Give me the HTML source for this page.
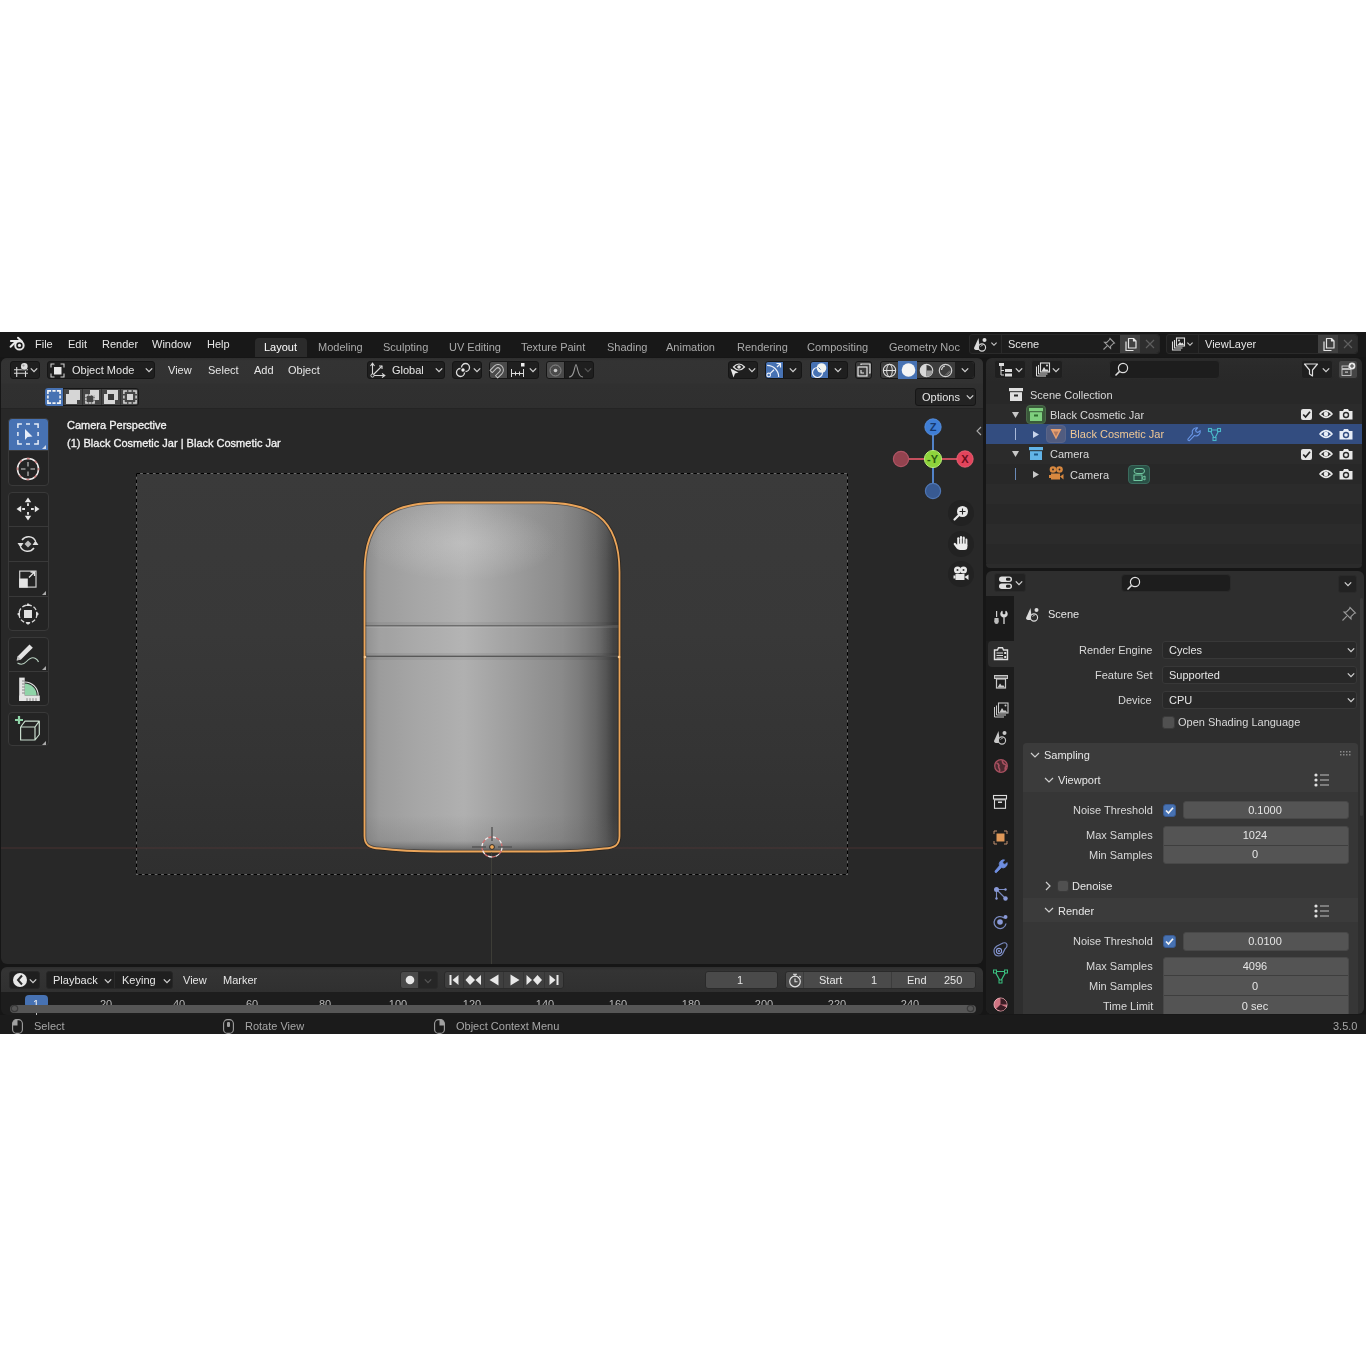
<!DOCTYPE html><html><head><meta charset="utf-8"><style>
html,body{margin:0;padding:0;background:#fff;width:1366px;height:1366px;overflow:hidden}
body{position:relative;font-family:"Liberation Sans",sans-serif}
.t{position:absolute;line-height:14px;white-space:nowrap;will-change:transform}
svg{overflow:visible}
</style></head><body>

<div style="position:absolute;left:0px;top:332px;width:1366px;height:702px;background:#161616;border-radius:0px;"></div>
<div style="position:absolute;left:0px;top:332px;width:1366px;height:25px;background:#181818;border-radius:0px;"></div>
<svg style="position:absolute;left:8px;top:335px" width="20" height="20" viewBox="0 0 20 20"><g stroke="#e8e8e8" stroke-width="2" stroke-linecap="round" fill="none"><circle cx="11.44" cy="10.4" r="4.2"/><path d="M2.9 6 L12.5 6 M10 2.7 L14 6.5 M2.6 11.7 L8.2 6.3"/></g><circle cx="11.44" cy="10.4" r="1.6" fill="#e8e8e8"/></svg>
<div class="t" style="left:35px;top:337px;color:#e6e6e6;font-size:11px;">File</div>
<div class="t" style="left:68px;top:337px;color:#e6e6e6;font-size:11px;">Edit</div>
<div class="t" style="left:102px;top:337px;color:#e6e6e6;font-size:11px;">Render</div>
<div class="t" style="left:152px;top:337px;color:#e6e6e6;font-size:11px;">Window</div>
<div class="t" style="left:207px;top:337px;color:#e6e6e6;font-size:11px;">Help</div>
<div style="position:absolute;left:255px;top:338px;width:52px;height:19px;background:#2b2b2b;border-radius:4px;border-bottom-left-radius:0;border-bottom-right-radius:0"></div>
<div class="t" style="left:264px;top:340px;color:#ffffff;font-size:11px;">Layout</div>
<div class="t" style="left:318px;top:340px;color:#aaaaaa;font-size:11px;">Modeling</div>
<div class="t" style="left:383px;top:340px;color:#aaaaaa;font-size:11px;">Sculpting</div>
<div class="t" style="left:449px;top:340px;color:#aaaaaa;font-size:11px;">UV Editing</div>
<div class="t" style="left:521px;top:340px;color:#aaaaaa;font-size:11px;">Texture Paint</div>
<div class="t" style="left:607px;top:340px;color:#aaaaaa;font-size:11px;">Shading</div>
<div class="t" style="left:666px;top:340px;color:#aaaaaa;font-size:11px;">Animation</div>
<div class="t" style="left:737px;top:340px;color:#aaaaaa;font-size:11px;">Rendering</div>
<div class="t" style="left:807px;top:340px;color:#aaaaaa;font-size:11px;">Compositing</div>
<div class="t" style="left:889px;top:340px;color:#aaaaaa;font-size:11px;">Geometry Noc</div>
<div style="position:absolute;left:962px;top:332px;width:7px;height:25px;background:#181818;border-radius:0px;"></div>
<div style="position:absolute;box-sizing:border-box;left:969px;top:334px;width:191px;height:20px;background:#1d1d1d;border-radius:3px;border:1px solid #2a2a2a;"></div>
<div style="position:absolute;left:1001px;top:335px;width:1px;height:18px;background:#2a2a2a;border-radius:0px;"></div>
<div style="position:absolute;left:1120px;top:335px;width:20px;height:18px;background:#404040;border-radius:0px;"></div>
<div style="position:absolute;left:1140px;top:335px;width:19px;height:18px;background:#2e2e2e;border-radius:0px;border-top-right-radius:3px;border-bottom-right-radius:3px"></div>
<div style="position:absolute;box-sizing:border-box;left:1166px;top:334px;width:192px;height:20px;background:#1d1d1d;border-radius:3px;border:1px solid #2a2a2a;"></div>
<div style="position:absolute;left:1198px;top:335px;width:1px;height:18px;background:#2a2a2a;border-radius:0px;"></div>
<div style="position:absolute;left:1318px;top:335px;width:20px;height:18px;background:#404040;border-radius:0px;"></div>
<div style="position:absolute;left:1338px;top:335px;width:19px;height:18px;background:#2e2e2e;border-radius:0px;border-top-right-radius:3px;border-bottom-right-radius:3px"></div>
<div class="t" style="left:1008px;top:337px;color:#e6e6e6;font-size:11px;">Scene</div>
<div class="t" style="left:1205px;top:337px;color:#e6e6e6;font-size:11px;">ViewLayer</div>
<svg style="position:absolute;left:973px;top:337px" width="14" height="14" viewBox="0 0 14 14"><path d="M5.5 1 L1 11 Q1 13 4 13 L7 13 Z" fill="#dcdcdc"/><circle cx="11.5" cy="3" r="2" fill="#dcdcdc"/><circle cx="9" cy="10.5" r="3.6" fill="#1d1d1d" stroke="#dcdcdc" stroke-width="1.1"/><path d="M7.6 9.6 Q8.2 8.4 9.6 8.4" stroke="#dcdcdc" stroke-width="0.9" fill="none"/></svg>
<svg style="position:absolute;left:988px;top:339px" width="12" height="10" viewBox="0 0 12 10"><path d="M3.4 3.7 L6 6.3 L8.6 3.7" fill="none" stroke="#cfcfcf" stroke-width="1.1"/></svg>
<svg style="position:absolute;left:1102px;top:337px" width="14" height="14" viewBox="0 0 14 14"><path d="M8 1.5 L12.5 6 L11.2 6.6 L8.6 9.2 L8.6 11.5 L2.5 5.4 L4.8 5.4 L7.4 2.8 Z M5.2 8.8 L1.5 12.5" fill="none" stroke="#9a9a9a" stroke-width="1.1"/></svg>
<svg style="position:absolute;left:1123px;top:337px" width="14" height="14" viewBox="0 0 14 14"><path d="M5.5 1.5 L10.5 1.5 L13 4 L13 11 L5.5 11 Z M10.5 1.5 L10.5 4 L13 4" fill="none" stroke="#e4e4e4" stroke-width="1.2" stroke-linejoin="round"/><path d="M3 4.5 L3 13.5 L10.5 13.5" fill="none" stroke="#e4e4e4" stroke-width="1.2"/></svg>
<svg style="position:absolute;left:1321px;top:337px" width="14" height="14" viewBox="0 0 14 14"><path d="M5.5 1.5 L10.5 1.5 L13 4 L13 11 L5.5 11 Z M10.5 1.5 L10.5 4 L13 4" fill="none" stroke="#e4e4e4" stroke-width="1.2" stroke-linejoin="round"/><path d="M3 4.5 L3 13.5 L10.5 13.5" fill="none" stroke="#e4e4e4" stroke-width="1.2"/></svg>
<svg style="position:absolute;left:1143px;top:337px" width="14" height="14" viewBox="0 0 14 14"><path d="M3 3 L11 11 M11 3 L3 11" stroke="#5e5e5e" stroke-width="1.2"/></svg>
<svg style="position:absolute;left:1341px;top:337px" width="14" height="14" viewBox="0 0 14 14"><path d="M3 3 L11 11 M11 3 L3 11" stroke="#5e5e5e" stroke-width="1.2"/></svg>
<svg style="position:absolute;left:1171px;top:337px" width="14" height="14" viewBox="0 0 14 14"><path d="M1.5 4.5 L1.5 13 L10 13 M3.5 3 L3.5 11 L11.5 11" fill="none" stroke="#dcdcdc" stroke-width="1.1"/><rect x="5.5" y="1" width="8" height="8" fill="none" stroke="#dcdcdc" stroke-width="1.1"/><path d="M6.5 8 L9 5 L10.5 6.5 L11.5 5.5 L13 8 Z" fill="#dcdcdc"/><circle cx="8" cy="3.5" r="1" fill="#dcdcdc"/></svg>
<svg style="position:absolute;left:1184px;top:339px" width="12" height="10" viewBox="0 0 12 10"><path d="M3.4 3.7 L6 6.3 L8.6 3.7" fill="none" stroke="#cfcfcf" stroke-width="1.1"/></svg>
<div style="position:absolute;left:1px;top:358px;width:982px;height:606px;background:#282828;border-radius:6px;"></div>
<div style="position:absolute;left:1px;top:358px;width:982px;height:50px;background:linear-gradient(#2e2e2e 0px,#333333 3px,#323232 25px,#303030 26px,#2f2f2f 50px);border-radius:6px;border-bottom-left-radius:0;border-bottom-right-radius:0"></div>
<div style="position:absolute;left:1px;top:408px;width:982px;height:1px;background:#242424;border-radius:0px;"></div>
<div style="position:absolute;left:136px;top:473px;width:712px;height:402px;background:linear-gradient(#3a3a3a,#383838 40%,#343434 70%,#2f2f2f);border-radius:0px;"></div>
<svg style="position:absolute;left:136px;top:473px" width="712" height="402" viewBox="0 0 712 402"><rect x="0.5" y="0.5" width="711" height="401" fill="none" stroke="#6a6a6a" stroke-width="1"/><rect x="0.5" y="0.5" width="711" height="401" fill="none" stroke="#000" stroke-width="1" stroke-dasharray="3.6 2.8"/></svg>
<div style="position:absolute;box-sizing:border-box;left:10px;top:361px;width:30px;height:18px;background:#1f1f1f;border-radius:3px;border:1px solid #161616;"></div>
<svg style="position:absolute;left:13px;top:362px" width="18" height="16" viewBox="0 0 18 16"><g stroke="#d8d8d8" stroke-width="1.1" fill="none"><path d="M1 7.7 L15 7.7 M1 11.2 L15 11.2 M3.7 5 L3.7 15 M12.5 9 L12.5 15"/></g><circle cx="11.3" cy="4.4" r="3.7" fill="#2b2b2b"/><circle cx="11.3" cy="4.4" r="3.3" fill="#dedede"/><circle cx="10.5" cy="3.6" r="1.1" fill="#9a9a9a"/></svg>
<svg style="position:absolute;left:28px;top:365px" width="12" height="10" viewBox="0 0 12 10"><path d="M2.8 3.4 L6 6.6 L9.2 3.4" fill="none" stroke="#d0d0d0" stroke-width="1.3"/></svg>
<div style="position:absolute;box-sizing:border-box;left:47px;top:361px;width:108px;height:18px;background:#1f1f1f;border-radius:3px;border:1px solid #161616;"></div>
<svg style="position:absolute;left:50px;top:363px" width="15" height="15" viewBox="0 0 15 15"><path d="M1 4.5 L1 1 L4.5 1 M10.5 1 L14 1 L14 4.5 M14 10.5 L14 14 L10.5 14 M4.5 14 L1 14 L1 10.5" fill="none" stroke="#d0d0d0" stroke-width="1.1"/><rect x="4" y="4" width="7.5" height="7.5" fill="#e8e8e8"/></svg>
<div class="t" style="left:72px;top:363px;color:#e6e6e6;font-size:11px;">Object Mode</div>
<svg style="position:absolute;left:143px;top:365px" width="12" height="10" viewBox="0 0 12 10"><path d="M2.8 3.4 L6 6.6 L9.2 3.4" fill="none" stroke="#d0d0d0" stroke-width="1.3"/></svg>
<div class="t" style="left:168px;top:363px;color:#e6e6e6;font-size:11px;">View</div>
<div class="t" style="left:208px;top:363px;color:#e6e6e6;font-size:11px;">Select</div>
<div class="t" style="left:254px;top:363px;color:#e6e6e6;font-size:11px;">Add</div>
<div class="t" style="left:288px;top:363px;color:#e6e6e6;font-size:11px;">Object</div>
<div style="position:absolute;box-sizing:border-box;left:367px;top:361px;width:78px;height:18px;background:#1f1f1f;border-radius:3px;border:1px solid #161616;"></div>
<svg style="position:absolute;left:370px;top:362px" width="16" height="16" viewBox="0 0 16 16"><path d="M2.5 1.5 L2.5 13.5 L14.5 13.5 M2.5 13.5 L12 4" fill="none" stroke="#d8d8d8" stroke-width="1.1"/><path d="M0.5 4 L2.5 1.2 L4.5 4 M12 11.5 L14.8 13.5 L12 15.5 M9 4 L12 4 L12 7" fill="none" stroke="#d8d8d8" stroke-width="1.1"/><circle cx="2.5" cy="13.5" r="1.6" fill="#1f1f1f" stroke="#d8d8d8"/></svg>
<div class="t" style="left:392px;top:363px;color:#e6e6e6;font-size:11px;">Global</div>
<svg style="position:absolute;left:433px;top:365px" width="12" height="10" viewBox="0 0 12 10"><path d="M2.8 3.4 L6 6.6 L9.2 3.4" fill="none" stroke="#d0d0d0" stroke-width="1.3"/></svg>
<div style="position:absolute;box-sizing:border-box;left:452px;top:361px;width:30px;height:18px;background:#1f1f1f;border-radius:3px;border:1px solid #161616;"></div>
<svg style="position:absolute;left:455px;top:362px" width="16" height="16" viewBox="0 0 16 16"><path d="M6.5 5.5 A4 4 0 1 1 10.5 9.5" fill="none" stroke="#dcdcdc" stroke-width="1.3"/><path d="M9.5 10.5 A4 4 0 1 1 5.5 6.5" fill="none" stroke="#dcdcdc" stroke-width="1.3"/><circle cx="8" cy="8" r="1.7" fill="#eeeeee"/></svg>
<svg style="position:absolute;left:471px;top:365px" width="12" height="10" viewBox="0 0 12 10"><path d="M2.8 3.4 L6 6.6 L9.2 3.4" fill="none" stroke="#d0d0d0" stroke-width="1.3"/></svg>
<div style="position:absolute;box-sizing:border-box;left:489px;top:361px;width:19px;height:18px;background:#4a4a4a;border-radius:3px;border:1px solid #161616;border-top-right-radius:0;border-bottom-right-radius:0"></div>
<svg style="position:absolute;left:490px;top:362px" width="16" height="16" viewBox="0 0 16 16"><g transform="translate(8 8) rotate(-135) scale(0.9) translate(-6 -6.5)"><path d="M0 0 L3.5 0 L3.5 6.5 A2.5 2.5 0 0 0 8.5 6.5 L8.5 0 L12 0 L12 6.5 A6 6 0 0 1 0 6.5 Z" fill="none" stroke="#c4c4c4" stroke-width="1.1" stroke-linejoin="round"/></g></svg>
<div style="position:absolute;box-sizing:border-box;left:507px;top:361px;width:32px;height:18px;background:#1f1f1f;border-radius:3px;border:1px solid #161616;border-top-left-radius:0;border-bottom-left-radius:0"></div>
<svg style="position:absolute;left:510px;top:362px" width="16" height="16" viewBox="0 0 16 16"><path d="M1 11.5 L14 11.5 M1.5 7 L1.5 15 M5.5 9.5 L5.5 13.5 M9.5 9.5 L9.5 13.5 M13.5 7 L13.5 15" stroke="#dcdcdc" stroke-width="1"/><rect x="11" y="1" width="3.5" height="3.5" fill="#eeeeee"/></svg>
<svg style="position:absolute;left:527px;top:365px" width="12" height="10" viewBox="0 0 12 10"><path d="M2.8 3.4 L6 6.6 L9.2 3.4" fill="none" stroke="#d0d0d0" stroke-width="1.3"/></svg>
<div style="position:absolute;box-sizing:border-box;left:546px;top:361px;width:19px;height:18px;background:#4a4a4a;border-radius:3px;border:1px solid #161616;border-top-right-radius:0;border-bottom-right-radius:0"></div>
<svg style="position:absolute;left:548px;top:363px" width="15" height="15" viewBox="0 0 15 15"><circle cx="7.5" cy="7.5" r="5.5" fill="none" stroke="#8a8a8a" stroke-width="1"/><circle cx="7.5" cy="7.5" r="1.8" fill="#c8c8c8"/></svg>
<div style="position:absolute;box-sizing:border-box;left:564px;top:361px;width:30px;height:18px;background:#1f1f1f;border-radius:3px;border:1px solid #161616;border-top-left-radius:0;border-bottom-left-radius:0"></div>
<svg style="position:absolute;left:568px;top:363px" width="16" height="15" viewBox="0 0 16 15"><path d="M1 14 Q4.5 14 6 8 Q7.5 1.5 8 1.5 Q8.5 1.5 10 8 Q11.5 14 15 14" fill="none" stroke="#9a9a9a" stroke-width="1.1"/></svg>
<svg style="position:absolute;left:582px;top:365px" width="12" height="10" viewBox="0 0 12 10"><path d="M2.8 3.4 L6 6.6 L9.2 3.4" fill="none" stroke="#555" stroke-width="1.3"/></svg>
<div style="position:absolute;box-sizing:border-box;left:728px;top:361px;width:30px;height:18px;background:#1f1f1f;border-radius:3px;border:1px solid #161616;"></div>
<svg style="position:absolute;left:729px;top:362px" width="17" height="17" viewBox="0 0 17 17"><path d="M4.5 5 Q10 -1 15.5 5 Q10 11 4.5 5 Z" fill="none" stroke="#e0e0e0" stroke-width="1.2"/><circle cx="10" cy="5" r="1.8" fill="#e0e0e0"/><path d="M1.5 6.5 L9.5 10.5 L6 11.5 L4.5 15.5 Z" fill="#e8e8e8"/></svg>
<svg style="position:absolute;left:746px;top:365px" width="12" height="10" viewBox="0 0 12 10"><path d="M2.8 3.4 L6 6.6 L9.2 3.4" fill="none" stroke="#d0d0d0" stroke-width="1.3"/></svg>
<div style="position:absolute;box-sizing:border-box;left:765px;top:361px;width:19px;height:18px;background:#4772b3;border-radius:3px;border:1px solid #161616;border-top-right-radius:0;border-bottom-right-radius:0"></div>
<svg style="position:absolute;left:766px;top:362px" width="16" height="16" viewBox="0 0 16 16"><path d="M1.1 3.4 A11.6 11.6 0 0 1 12.7 15" fill="none" stroke="#eef2fa" stroke-width="1.2"/><circle cx="2.7" cy="12.9" r="1.8" fill="none" stroke="#eef2fa" stroke-width="1.1"/><path d="M4 11.6 L8 7.8 M11 5 L14.5 1.5 M10.5 1.5 L14.5 1.5 L14.5 5.5" fill="none" stroke="#eef2fa" stroke-width="1.2"/></svg>
<div style="position:absolute;box-sizing:border-box;left:783px;top:361px;width:19px;height:18px;background:#1f1f1f;border-radius:3px;border:1px solid #161616;border-top-left-radius:0;border-bottom-left-radius:0"></div>
<svg style="position:absolute;left:787px;top:365px" width="12" height="10" viewBox="0 0 12 10"><path d="M2.8 3.4 L6 6.6 L9.2 3.4" fill="none" stroke="#d0d0d0" stroke-width="1.3"/></svg>
<div style="position:absolute;box-sizing:border-box;left:810px;top:361px;width:19px;height:18px;background:#4772b3;border-radius:3px;border:1px solid #161616;border-top-right-radius:0;border-bottom-right-radius:0"></div>
<svg style="position:absolute;left:811px;top:362px" width="17" height="17" viewBox="0 0 17 17"><circle cx="6.5" cy="10.5" r="5" fill="none" stroke="#eef2fa" stroke-width="1.2"/><circle cx="10.5" cy="6" r="4.8" fill="#f2f4f0"/><path d="M7.5 5.5 L9.5 7.5" stroke="#4772b3" stroke-width="1"/></svg>
<div style="position:absolute;box-sizing:border-box;left:828px;top:361px;width:20px;height:18px;background:#1f1f1f;border-radius:3px;border:1px solid #161616;border-top-left-radius:0;border-bottom-left-radius:0"></div>
<svg style="position:absolute;left:832px;top:365px" width="12" height="10" viewBox="0 0 12 10"><path d="M2.8 3.4 L6 6.6 L9.2 3.4" fill="none" stroke="#d0d0d0" stroke-width="1.3"/></svg>
<div style="position:absolute;box-sizing:border-box;left:855px;top:361px;width:17px;height:18px;background:#3d3d3d;border-radius:3px;border:1px solid #161616;"></div>
<svg style="position:absolute;left:856px;top:362px" width="16" height="16" viewBox="0 0 16 16"><rect x="2" y="5" width="9" height="9" fill="none" stroke="#e8e8e8" stroke-width="1.2"/><path d="M5 3 L5 2 L14 2 L14 11 L13 11" fill="none" stroke="#e8e8e8" stroke-width="1.2"/><path d="M5 8 L5 11 L8 11" stroke="#e8e8e8" stroke-width="1.1" fill="none"/></svg>
<div style="position:absolute;box-sizing:border-box;left:880px;top:361px;width:95px;height:18px;background:#3d3d3d;border-radius:3px;border:1px solid #161616;"></div>
<div style="position:absolute;left:898px;top:361px;width:19px;height:18px;background:#4772b3;border-radius:0px;"></div>
<div style="position:absolute;left:955px;top:362px;width:19px;height:16px;background:#1f1f1f;border-radius:0px;border-top-right-radius:3px;border-bottom-right-radius:3px"></div>
<svg style="position:absolute;left:882px;top:363px" width="15" height="15" viewBox="0 0 15 15"><circle cx="7.5" cy="7.5" r="6.2" fill="none" stroke="#e0e0e0" stroke-width="1.1"/><ellipse cx="7.5" cy="7.5" rx="2.8" ry="6.2" fill="none" stroke="#e0e0e0" stroke-width="1"/><path d="M1.3 7.5 L13.7 7.5" stroke="#e0e0e0" stroke-width="1"/></svg>
<svg style="position:absolute;left:901px;top:363px" width="15" height="15" viewBox="0 0 15 15"><circle cx="7.5" cy="7" r="6.8" fill="#f4f4f4"/></svg>
<svg style="position:absolute;left:919px;top:363px" width="15" height="15" viewBox="0 0 15 15"><circle cx="7.5" cy="7.5" r="6.2" fill="#3a3a3a" stroke="#d8d8d8" stroke-width="1.2"/><path d="M7.5 1.3 A6.2 6.2 0 0 0 7.5 13.7 Z" fill="#d8d8d8"/><path d="M7.5 7.5 L13.7 7.5 A6.2 6.2 0 0 1 7.5 13.7 Z" fill="#9a9a9a"/></svg>
<svg style="position:absolute;left:938px;top:363px" width="15" height="15" viewBox="0 0 15 15"><circle cx="7.5" cy="7.5" r="6.2" fill="none" stroke="#d0d0d0" stroke-width="1.2"/><path d="M3.5 7 Q4 3.5 7 3" stroke="#d0d0d0" stroke-width="1.2" fill="none"/><path d="M9 12 L12.5 8.5 M7 12.5 L12 7.5" stroke="#888" stroke-width="0.8"/></svg>
<svg style="position:absolute;left:959px;top:365px" width="12" height="10" viewBox="0 0 12 10"><path d="M2.8 3.4 L6 6.6 L9.2 3.4" fill="none" stroke="#d0d0d0" stroke-width="1.3"/></svg>
<div style="position:absolute;box-sizing:border-box;left:45px;top:388px;width:94px;height:18px;background:#454545;border-radius:3px;border:1px solid #161616;"></div>
<div style="position:absolute;left:45px;top:388px;width:18px;height:18px;background:#4772b3;border-radius:3px;border-top-right-radius:0;border-bottom-right-radius:0"></div>
<div style="position:absolute;left:63px;top:389px;width:1px;height:16px;background:#2f2f2f;border-radius:0px;"></div>
<div style="position:absolute;left:82px;top:389px;width:1px;height:16px;background:#2f2f2f;border-radius:0px;"></div>
<div style="position:absolute;left:101px;top:389px;width:1px;height:16px;background:#2f2f2f;border-radius:0px;"></div>
<div style="position:absolute;left:120px;top:389px;width:1px;height:16px;background:#2f2f2f;border-radius:0px;"></div>
<svg style="position:absolute;left:47px;top:390px" width="14" height="14" viewBox="0 0 14 14"><path d="M0.9 4.1000000000000005 L0.9 0.9 L4.1000000000000005 0.9 M9.899999999999999 0.9 L13.1 0.9 L13.1 4.1000000000000005 M13.1 9.899999999999999 L13.1 13.1 L9.899999999999999 13.1 M4.1000000000000005 13.1 L0.9 13.1 L0.9 9.899999999999999 M5.4 0.9 L8.6 0.9 M5.4 13.1 L8.6 13.1 M0.9 5.4 L0.9 8.6 M13.1 5.4 L13.1 8.6" fill="none" stroke="#f4f4f4" stroke-width="1.6"/></svg>
<svg style="position:absolute;left:66px;top:390px" width="14" height="14" viewBox="0 0 14 14"><path d="M3 0 L14 0 L14 10 L11 10 L11 14 L0 14 L0 4 L3 4 Z" fill="#d6d6d6"/></svg>
<svg style="position:absolute;left:85px;top:390px" width="14" height="14" viewBox="0 0 14 14"><path d="M5 0 L14 0 L14 10 L10 10 L10 5 L5 5 Z" fill="#d6d6d6"/><path d="M0.9 7.4 L0.9 4.9 L3.4 4.9 M6.6 4.9 L9.1 4.9 L9.1 7.4 M9.1 10.6 L9.1 13.1 L6.6 13.1 M3.4 13.1 L0.9 13.1 L0.9 10.6 M3.9 4.9 L6.1 4.9 M3.9 13.1 L6.1 13.1 M0.9 7.9 L0.9 10.1 M9.1 7.9 L9.1 10.1" fill="none" stroke="#d6d6d6" stroke-width="1.5"/></svg>
<svg style="position:absolute;left:104px;top:390px" width="14" height="14" viewBox="0 0 14 14"><path d="M3 0 L14 0 L14 10 L11 10 L11 14 L0 14 L0 4 L3 4 Z" fill="#d6d6d6"/><rect x="4" y="4" width="6" height="6" fill="#3a3a3a"/></svg>
<svg style="position:absolute;left:123px;top:390px" width="14" height="14" viewBox="0 0 14 14"><path d="M0.9 4.1000000000000005 L0.9 0.9 L4.1000000000000005 0.9 M9.899999999999999 0.9 L13.1 0.9 L13.1 4.1000000000000005 M13.1 9.899999999999999 L13.1 13.1 L9.899999999999999 13.1 M4.1000000000000005 13.1 L0.9 13.1 L0.9 9.899999999999999 M5.4 0.9 L8.6 0.9 M5.4 13.1 L8.6 13.1 M0.9 5.4 L0.9 8.6 M13.1 5.4 L13.1 8.6" fill="none" stroke="#d6d6d6" stroke-width="1.5"/><rect x="4" y="4" width="6" height="6" fill="#d6d6d6"/></svg>
<div style="position:absolute;box-sizing:border-box;left:915px;top:388px;width:61px;height:18px;background:#232323;border-radius:3px;border:1px solid #161616;"></div>
<div class="t" style="left:922px;top:390px;color:#e6e6e6;font-size:11px;">Options</div>
<svg style="position:absolute;left:964px;top:392px" width="12" height="10" viewBox="0 0 12 10"><path d="M2.8 3.4 L6 6.6 L9.2 3.4" fill="none" stroke="#d0d0d0" stroke-width="1.3"/></svg>
<div class="t" style="left:67px;top:418px;color:#f4f4f4;font-size:11px;-webkit-text-stroke:0.3px #f4f4f4">Camera Perspective</div>
<div class="t" style="left:67px;top:436px;color:#f4f4f4;font-size:11px;-webkit-text-stroke:0.3px #f4f4f4">(1) Black Cosmetic Jar | Black Cosmetic Jar</div>
<div style="position:absolute;box-sizing:border-box;left:8px;top:418px;width:41px;height:33px;background:#4772b3;border:1px solid #393939;border-top-left-radius:4px;border-top-right-radius:4px;border-bottom-left-radius:0px;border-bottom-right-radius:0px;"></div>
<div style="position:absolute;box-sizing:border-box;left:8px;top:450px;width:41px;height:36px;background:#242424;border:1px solid #393939;border-top-left-radius:0px;border-top-right-radius:0px;border-bottom-left-radius:4px;border-bottom-right-radius:4px;"></div>
<div style="position:absolute;box-sizing:border-box;left:8px;top:492px;width:41px;height:35px;background:#242424;border:1px solid #393939;border-top-left-radius:4px;border-top-right-radius:4px;border-bottom-left-radius:0px;border-bottom-right-radius:0px;"></div>
<div style="position:absolute;box-sizing:border-box;left:8px;top:526px;width:41px;height:36px;background:#242424;border:1px solid #393939;border-top-left-radius:0px;border-top-right-radius:0px;border-bottom-left-radius:0px;border-bottom-right-radius:0px;"></div>
<div style="position:absolute;box-sizing:border-box;left:8px;top:561px;width:41px;height:36px;background:#242424;border:1px solid #393939;border-top-left-radius:0px;border-top-right-radius:0px;border-bottom-left-radius:0px;border-bottom-right-radius:0px;"></div>
<div style="position:absolute;box-sizing:border-box;left:8px;top:596px;width:41px;height:35px;background:#242424;border:1px solid #393939;border-top-left-radius:0px;border-top-right-radius:0px;border-bottom-left-radius:4px;border-bottom-right-radius:4px;"></div>
<div style="position:absolute;box-sizing:border-box;left:8px;top:637px;width:41px;height:35px;background:#242424;border:1px solid #393939;border-top-left-radius:4px;border-top-right-radius:4px;border-bottom-left-radius:0px;border-bottom-right-radius:0px;"></div>
<div style="position:absolute;box-sizing:border-box;left:8px;top:671px;width:41px;height:35px;background:#242424;border:1px solid #393939;border-top-left-radius:0px;border-top-right-radius:0px;border-bottom-left-radius:4px;border-bottom-right-radius:4px;"></div>
<div style="position:absolute;box-sizing:border-box;left:8px;top:712px;width:41px;height:34px;background:#242424;border:1px solid #393939;border-top-left-radius:4px;border-top-right-radius:4px;border-bottom-left-radius:4px;border-bottom-right-radius:4px;"></div>
<svg style="position:absolute;left:42px;top:445px" width="4" height="4" viewBox="0 0 4 4"><path d="M4 0 L4 4 L0 4 Z" fill="#cfd8e8"/></svg>
<svg style="position:absolute;left:42px;top:591px" width="4" height="4" viewBox="0 0 4 4"><path d="M4 0 L4 4 L0 4 Z" fill="#aaa"/></svg>
<svg style="position:absolute;left:42px;top:666px" width="4" height="4" viewBox="0 0 4 4"><path d="M4 0 L4 4 L0 4 Z" fill="#aaa"/></svg>
<svg style="position:absolute;left:42px;top:741px" width="4" height="4" viewBox="0 0 4 4"><path d="M4 0 L4 4 L0 4 Z" fill="#aaa"/></svg>
<svg style="position:absolute;left:17px;top:423px" width="22" height="22" viewBox="0 0 22 22"><path d="M0.9 4.9 L0.9 0.9 L4.9 0.9 M17.1 0.9 L21.1 0.9 L21.1 4.9 M21.1 17.1 L21.1 21.1 L17.1 21.1 M4.9 21.1 L0.9 21.1 L0.9 17.1 M9.0 0.9 L13.0 0.9 M9.0 21.1 L13.0 21.1 M0.9 9.0 L0.9 13.0 M21.1 9.0 L21.1 13.0" fill="none" stroke="#e8eef8" stroke-width="1.5"/><path d="M8 6 L8 17 L10.5 14 L15.5 13.5 Z" fill="#e8eef8"/></svg>
<svg style="position:absolute;left:16px;top:457px" width="24" height="24" viewBox="0 0 24 24"><circle cx="12" cy="12" r="10.5" fill="none" stroke="#f0eeee" stroke-width="1.5"/><circle cx="12" cy="12" r="10.5" fill="none" stroke="#c86060" stroke-width="1.5" stroke-dasharray="3 5.25" stroke-dashoffset="1.5" opacity="0.7"/><path d="M12 5 L12 9.5 M12 14.5 L12 19 M5 12 L9.5 12 M14.5 12 L19 12" stroke="#9a9a9a" stroke-width="1.6"/></svg>
<svg style="position:absolute;left:16px;top:497px" width="24" height="24" viewBox="0 0 24 24"><g fill="#e8e8e8"><path d="M12 0.5 L15.2 5.2 L8.8 5.2 Z M12 23.5 L15.2 18.8 L8.8 18.8 Z M0.5 12 L5.2 8.8 L5.2 15.2 Z M23.5 12 L18.8 8.8 L18.8 15.2 Z"/></g><path d="M12 6.2 L12 9 M12 15 L12 17.8 M6.2 12 L9 12 M15 12 L17.8 12" stroke="#e8e8e8" stroke-width="1.8"/></svg>
<svg style="position:absolute;left:16px;top:532px" width="24" height="24" viewBox="0 0 24 24"><path d="M6 8 A8 8 0 0 1 19.5 9 M18 16 A8 8 0 0 1 4.5 15" fill="none" stroke="#e0e0e0" stroke-width="1.5"/><path d="M1.5 11 L7.5 11 L4.5 15.5 Z M16.5 13 L22.5 13 L19.5 8.5 Z" fill="#e0e0e0"/><path d="M12 8.5 L15.5 12 L12 15.5 L8.5 12 Z" fill="#bdbdbd"/></svg>
<svg style="position:absolute;left:17px;top:568px" width="22" height="22" viewBox="0 0 22 22"><rect x="2.7" y="3.1" width="16.3" height="16" fill="none" stroke="#cfcfcf" stroke-width="1.2"/><rect x="2.2" y="10.5" width="8.6" height="9.1" fill="#e4e4e4"/><path d="M12 9.5 L17.5 4 M13.5 4 L17.5 4 L17.5 8" fill="none" stroke="#e4e4e4" stroke-width="1.3"/></svg>
<svg style="position:absolute;left:16px;top:602px" width="24" height="24" viewBox="0 0 24 24"><circle cx="12" cy="12" r="9" fill="none" stroke="#d8d8d8" stroke-width="1.3" stroke-dasharray="4 2"/><rect x="8" y="8" width="8" height="8" fill="#e0e0e0"/><path d="M12 1 L14.5 4 L9.5 4 Z M12 23 L14.5 20 L9.5 20 Z M1 12 L4 9.5 L4 14.5 Z M23 12 L20 9.5 L20 14.5 Z" fill="#e0e0e0"/></svg>
<svg style="position:absolute;left:15px;top:642px" width="26" height="26" viewBox="0 0 26 26"><path d="M1.5 18.5 L2.8 14.2 L14.5 2.5 L17.8 5.8 L6 17.5 Z" fill="#e4e4e4"/><path d="M2 18.5 L6 17.4 L2.8 14.2 Z" fill="#bdbdbd"/><path d="M2.5 21 Q7.5 24 11.5 19.5 Q16.5 14 20.5 16.5 Q23 18 23.5 20" fill="none" stroke="#b8d0c0" stroke-width="1.1"/></svg>
<svg style="position:absolute;left:15px;top:677px" width="26" height="26" viewBox="0 0 26 26"><path d="M9.7 6.5 A12 12 0 0 1 21.7 18.5 L9.7 18.5 Z" fill="#8fd4a8"/><path d="M9.7 5 A13.5 13.5 0 0 1 23.2 18.5" fill="none" stroke="#e4e4e4" stroke-width="1.1"/><rect x="4.2" y="0.6" width="5.5" height="23.4" fill="#e4e4e4"/><rect x="4.2" y="18.5" width="20.6" height="5.5" fill="#e4e4e4"/><path d="M7 4 L9.7 4 M7 7 L9.7 7 M7 10 L9.7 10 M7 13 L9.7 13 M7 16 L9.7 16 M12 21.2 L12 24 M15 21.2 L15 24 M18 21.2 L18 24 M21 21.2 L21 24" stroke="#707070" stroke-width="0.8"/></svg>
<svg style="position:absolute;left:14px;top:716px" width="28" height="28" viewBox="0 0 28 28"><path d="M1 4 L9 4 M5 0 L5 8" stroke="#8fd4a8" stroke-width="2.2"/><path d="M6.6 11 L21 11 L21 24 L6.6 24 Z M6.6 11 L11 5.2 L25.3 5.2 L21 11 M25.3 5.2 L25.3 18.5 L21 24" fill="none" stroke="#c8dccd" stroke-width="1.2" stroke-linejoin="round"/></svg>
<div style="position:absolute;left:1px;top:846.5px;width:982px;height:2.0px;background:rgba(110,60,60,0.22);border-radius:0px;"></div>
<svg style="position:absolute;left:330px;top:490px" width="300" height="380" viewBox="0 0 300 380">
<defs>
<linearGradient id="hg" x1="34" x2="290" y1="0" y2="0" gradientUnits="userSpaceOnUse"><stop offset="0" stop-color="#888888"/><stop offset="0.012" stop-color="#8e8e8e"/><stop offset="0.06" stop-color="#9c9c9c"/><stop offset="0.2" stop-color="#a6a6a6"/><stop offset="0.39" stop-color="#b0b0b0"/><stop offset="0.53" stop-color="#a2a2a2"/><stop offset="0.65" stop-color="#969696"/><stop offset="0.77" stop-color="#8a8a8a"/><stop offset="0.84" stop-color="#7c7c7c"/><stop offset="0.905" stop-color="#686868"/><stop offset="0.945" stop-color="#555555"/><stop offset="0.975" stop-color="#404040"/><stop offset="1" stop-color="#3c3c3c"/></linearGradient>
<radialGradient id="hl" cx="0.5" cy="0.5" r="0.5">
<stop offset="0" stop-color="#d0d0d0" stop-opacity="0.45"/><stop offset="1" stop-color="#d0d0d0" stop-opacity="0"/>
</radialGradient>
<linearGradient id="topv" x1="0" x2="0" y1="12" y2="70" gradientUnits="userSpaceOnUse">
<stop offset="0" stop-color="#808080" stop-opacity="0.1"/><stop offset="1" stop-color="#808080" stop-opacity="0"/>
</linearGradient>
<linearGradient id="botv" x1="0" x2="0" y1="325" y2="362" gradientUnits="userSpaceOnUse">
<stop offset="0" stop-color="#606060" stop-opacity="0"/><stop offset="0.7" stop-color="#606060" stop-opacity="0.2"/><stop offset="1" stop-color="#404040" stop-opacity="0.75"/>
</linearGradient>
<linearGradient id="bandr" x1="270" x2="290" y1="0" y2="0" gradientUnits="userSpaceOnUse">
<stop offset="0" stop-color="#000" stop-opacity="0"/><stop offset="1" stop-color="#000" stop-opacity="0.12"/>
</linearGradient>
<clipPath id="jc"><path d="M34.5 82.0 C34.5 25.0 65.0 13.0 110.0 12.5 L214.0 12.5 C259.0 13.0 289.5 25.0 289.5 82.0 L289.5 346.0 C289.5 355.0 285.0 358.0 274.0 358.5 Q250.0 361.5 216.0 361.5 L108.0 361.5 Q74.0 361.5 50.0 358.5 C39.0 358.0 34.5 355.0 34.5 346.0 Z"/></clipPath>
</defs>
<path d="M34.5 82.0 C34.5 25.0 65.0 13.0 110.0 12.5 L214.0 12.5 C259.0 13.0 289.5 25.0 289.5 82.0 L289.5 346.0 C289.5 355.0 285.0 358.0 274.0 358.5 Q250.0 361.5 216.0 361.5 L108.0 361.5 Q74.0 361.5 50.0 358.5 C39.0 358.0 34.5 355.0 34.5 346.0 Z" fill="url(#hg)"/>
<g clip-path="url(#jc)">
<rect x="0" y="0" width="300" height="80" fill="url(#topv)"/>
<ellipse cx="132" cy="53" rx="95" ry="38" fill="url(#hl)"/>
<rect x="0" y="325" width="300" height="40" fill="url(#botv)"/>
<rect x="0" y="136" width="300" height="30" fill="#ffffff" opacity="0.05"/>
<rect x="270" y="136" width="20" height="30" fill="url(#bandr)"/>
<rect x="0" y="132" width="300" height="3.5" fill="#000" opacity="0.05"/>
<rect x="0" y="135.20000000000005" width="300" height="1.2" fill="#585858" opacity="0.9"/>
<rect x="0" y="136.39999999999998" width="300" height="1.4" fill="#fff" opacity="0.1"/>
<rect x="0" y="163" width="300" height="2.5" fill="#000" opacity="0.06"/>
<rect x="0" y="165.60000000000002" width="300" height="1.4" fill="#505050" opacity="0.9"/>
<rect x="0" y="167" width="300" height="3" fill="#000" opacity="0.05"/>
</g>
<path d="M34.5 82.0 C34.5 25.0 65.0 13.0 110.0 12.5 L214.0 12.5 C259.0 13.0 289.5 25.0 289.5 82.0 L289.5 346.0 C289.5 355.0 285.0 358.0 274.0 358.5 Q250.0 361.5 216.0 361.5 L108.0 361.5 Q74.0 361.5 50.0 358.5 C39.0 358.0 34.5 355.0 34.5 346.0 Z" fill="none" stroke="#1a1208" stroke-opacity="0.45" stroke-width="3.6"/><path d="M34.5 82.0 C34.5 25.0 65.0 13.0 110.0 12.5 L214.0 12.5 C259.0 13.0 289.5 25.0 289.5 82.0 L289.5 346.0 C289.5 355.0 285.0 358.0 274.0 358.5 Q250.0 361.5 216.0 361.5 L108.0 361.5 Q74.0 361.5 50.0 358.5 C39.0 358.0 34.5 355.0 34.5 346.0 Z" fill="none" stroke="#eba55a" stroke-width="1.8"/>
<circle cx="35" cy="167" r="1.3" fill="#f8c890"/><circle cx="289" cy="167" r="1.3" fill="#f8c890"/>
</svg>
<div style="position:absolute;left:491px;top:852px;width:1px;height:112px;background:rgba(75,75,65,0.6);border-radius:0px;"></div>
<svg style="position:absolute;left:478px;top:833px" width="28" height="28" viewBox="0 0 28 28"><circle cx="14" cy="14" r="10" fill="none" stroke="#f0e8e8" stroke-width="1.3" stroke-dasharray="4 3.85"/><circle cx="14" cy="14" r="10" fill="none" stroke="#d07070" stroke-width="1.3" stroke-dasharray="4 3.85" stroke-dashoffset="4"/><path d="M14 -6 L14 8 M-6 14 L8 14 M20 14 L34 14" stroke="#555" stroke-width="1.4"/></svg>
<svg style="position:absolute;left:487px;top:842px" width="10" height="10" viewBox="0 0 10 10"><circle cx="5" cy="5" r="2.4" fill="#f0aa5a" stroke="#2a2a2a" stroke-width="1"/></svg>
<svg style="position:absolute;left:901px;top:417px" width="64" height="84" viewBox="0 0 64 84">
<line x1="32" y1="10" x2="32" y2="74" stroke="#5282c8" stroke-width="2"/>
<line x1="0" y1="42" x2="64" y2="42" stroke="#c4505e" stroke-width="2"/>
<circle cx="32" cy="10" r="8.2" fill="#3f7ed6" stroke="#5a92e0" stroke-width="0.8"/>
<circle cx="32" cy="74" r="7.6" fill="#385a92" stroke="#4f76b4" stroke-width="1.2"/>
<circle cx="0" cy="42" r="7.6" fill="#93434f" stroke="#b05565" stroke-width="1.2"/>
<circle cx="64" cy="42" r="8.2" fill="#e3445c" stroke="#ee6878" stroke-width="0.8"/>
<circle cx="32" cy="42" r="8.6" fill="#8fd43c" stroke="#b8ec78" stroke-width="1"/>
<text x="32" y="14.3" font-size="11" font-family="Liberation Sans" font-weight="bold" fill="#16386e" text-anchor="middle">Z</text>
<text x="64" y="46.3" font-size="11" font-family="Liberation Sans" font-weight="bold" fill="#6a0c1a" text-anchor="middle">X</text>
<text x="31.5" y="46.3" font-size="11" font-family="Liberation Sans" font-weight="bold" fill="#2a5a10" text-anchor="middle">-Y</text>
</svg>
<svg style="position:absolute;left:975px;top:426px" width="8" height="10" viewBox="0 0 8 10"><path d="M6 1 L2 5 L6 9" fill="none" stroke="#aaa" stroke-width="1.1"/></svg>
<svg style="position:absolute;left:948px;top:500px" width="26" height="26" viewBox="0 0 26 26"><circle cx="13" cy="13" r="13" fill="#212121" opacity="0.9"/></svg>
<svg style="position:absolute;left:948px;top:531px" width="26" height="26" viewBox="0 0 26 26"><circle cx="13" cy="13" r="13" fill="#212121" opacity="0.9"/></svg>
<svg style="position:absolute;left:948px;top:561px" width="26" height="26" viewBox="0 0 26 26"><circle cx="13" cy="13" r="13" fill="#212121" opacity="0.9"/></svg>
<svg style="position:absolute;left:952px;top:504px" width="18" height="18" viewBox="0 0 18 18"><circle cx="10.5" cy="7.5" r="5.5" fill="#e8e8e8"/><path d="M10.5 4.5 L10.5 10.5 M7.5 7.5 L13.5 7.5" stroke="#222" stroke-width="1.1"/><path d="M6.5 11.5 L2.5 15.5" stroke="#e8e8e8" stroke-width="2.2" stroke-linecap="round"/></svg>
<svg style="position:absolute;left:952px;top:535px" width="18" height="18" viewBox="0 0 18 18"><g fill="#ececec"><rect x="5.2" y="2.2" width="2.2" height="9" rx="1.1"/><rect x="7.9" y="1" width="2.2" height="10" rx="1.1"/><rect x="10.6" y="1.6" width="2.2" height="9.5" rx="1.1"/><rect x="13.3" y="3.6" width="2.1" height="8" rx="1.05"/><rect x="5.2" y="8" width="10.2" height="7" rx="3"/><path d="M5.5 14.5 L1.8 9.6 Q1.2 8.4 2.3 7.9 Q3.2 7.6 3.9 8.6 L6.5 11.5 Z"/></g><path d="M7.6 4 L7.6 9 M10.3 3.5 L10.3 9 M13 4.5 L13 9" stroke="#2a2a2a" stroke-width="0.5"/></svg>
<svg style="position:absolute;left:952px;top:565px" width="18" height="18" viewBox="0 0 18 18"><circle cx="5.5" cy="5" r="3.5" fill="#e8e8e8"/><circle cx="11.5" cy="5" r="3.5" fill="#e8e8e8"/><circle cx="5.5" cy="5" r="1" fill="#333"/><circle cx="11.5" cy="5" r="1" fill="#333"/><rect x="3.5" y="9" width="9" height="6" fill="#e8e8e8"/><path d="M12.5 12 L16.5 9.5 L16.5 15 Z" fill="#e8e8e8"/><rect x="1.5" y="10.5" width="2" height="3" fill="#e8e8e8"/></svg>
<div style="position:absolute;left:986px;top:358px;width:376px;height:210px;background:linear-gradient(#2c2c2c,#2a2a2a 8px,#282828 24px);border-radius:6px;"></div>
<div style="position:absolute;left:986px;top:404px;width:376px;height:20px;background:#2b2b2b;border-radius:0px;"></div>
<div style="position:absolute;left:986px;top:444px;width:376px;height:20px;background:#2b2b2b;border-radius:0px;"></div>
<div style="position:absolute;left:986px;top:484px;width:376px;height:20px;background:#2b2b2b;border-radius:0px;"></div>
<div style="position:absolute;left:986px;top:524px;width:376px;height:20px;background:#2b2b2b;border-radius:0px;"></div>
<div style="position:absolute;left:986px;top:564px;width:376px;height:4px;background:#2b2b2b;border-radius:0px;border-bottom-left-radius:6px;border-bottom-right-radius:6px"></div>
<div style="position:absolute;box-sizing:border-box;left:994px;top:360px;width:32px;height:19px;background:#1f1f1f;border-radius:3px;border:1px solid #2a2a2a;"></div>
<svg style="position:absolute;left:998px;top:362px" width="16" height="16" viewBox="0 0 16 16"><rect x="1" y="1" width="5" height="3" fill="#dcdcdc"/><path d="M3 4 L3 13 L6 13 M3 8.5 L6 8.5" fill="none" stroke="#dcdcdc" stroke-width="1"/><rect x="7" y="7" width="7" height="3" fill="#dcdcdc"/><rect x="7" y="11.5" width="7" height="3" fill="#dcdcdc"/></svg>
<svg style="position:absolute;left:1013px;top:365px" width="12" height="10" viewBox="0 0 12 10"><path d="M2.8 3.4 L6 6.6 L9.2 3.4" fill="none" stroke="#d0d0d0" stroke-width="1.3"/></svg>
<div style="position:absolute;box-sizing:border-box;left:1031px;top:360px;width:32px;height:19px;background:#1f1f1f;border-radius:3px;border:1px solid #2a2a2a;"></div>
<svg style="position:absolute;left:1035px;top:362px" width="16" height="16" viewBox="0 0 16 16"><path d="M1.5 4.5 L1.5 14 L11 14 M3.5 3 L3.5 12 L12.5 12" fill="none" stroke="#dcdcdc" stroke-width="1"/><rect x="5.5" y="1" width="9" height="9" fill="none" stroke="#dcdcdc" stroke-width="1.1"/><path d="M6.5 9.5 L9 5 L11 8 L12 7 L14 9.5 Z" fill="#dcdcdc"/><circle cx="12" cy="3.5" r="1" fill="#dcdcdc"/></svg>
<svg style="position:absolute;left:1050px;top:365px" width="12" height="10" viewBox="0 0 12 10"><path d="M2.8 3.4 L6 6.6 L9.2 3.4" fill="none" stroke="#d0d0d0" stroke-width="1.3"/></svg>
<div style="position:absolute;box-sizing:border-box;left:1109px;top:360px;width:111px;height:19px;background:#1d1d1d;border-radius:4px;border:1px solid #2a2a2a;"></div>
<svg style="position:absolute;left:1114px;top:362px" width="15" height="15" viewBox="0 0 15 15"><circle cx="9" cy="6" r="4.6" fill="none" stroke="#e0e0e0" stroke-width="1.2"/><path d="M5.6 9.4 L1.5 13.5" stroke="#e0e0e0" stroke-width="1.5"/></svg>
<div style="position:absolute;box-sizing:border-box;left:1301px;top:360px;width:32px;height:19px;background:#1f1f1f;border-radius:3px;border:1px solid #2a2a2a;"></div>
<svg style="position:absolute;left:1303px;top:362px" width="16" height="16" viewBox="0 0 16 16"><path d="M1.5 2 L14.5 2 L9.5 8 L9.5 14 L6.5 12 L6.5 8 Z" fill="none" stroke="#e0e0e0" stroke-width="1.2" stroke-linejoin="round"/></svg>
<svg style="position:absolute;left:1320px;top:365px" width="12" height="10" viewBox="0 0 12 10"><path d="M2.8 3.4 L6 6.6 L9.2 3.4" fill="none" stroke="#d0d0d0" stroke-width="1.3"/></svg>
<div style="position:absolute;box-sizing:border-box;left:1338px;top:360px;width:20px;height:19px;background:#454545;border-radius:3px;border:1px solid #2a2a2a;"></div>
<svg style="position:absolute;left:1340px;top:362px" width="16" height="16" viewBox="0 0 16 16"><rect x="2" y="4" width="7" height="2.5" fill="none" stroke="#c8c8c8" stroke-width="0.9"/><rect x="2" y="7.5" width="9" height="6" fill="none" stroke="#c8c8c8" stroke-width="0.9"/><rect x="5" y="9.5" width="3" height="1.2" fill="#c8c8c8"/><circle cx="12" cy="4" r="3.4" fill="#e8e8e8"/><path d="M12 2 L12 6 M10 4 L14 4" stroke="#454545" stroke-width="1.1"/></svg>
<svg style="position:absolute;left:1009px;top:388px" width="14" height="13" viewBox="0 0 14 13"><rect x="0" y="0" width="14" height="3.2" fill="#e0e0e0"/><rect x="1" y="4.2" width="12" height="8.8" fill="#e0e0e0"/><rect x="5" y="6.5" width="4" height="2" fill="#282828"/></svg>
<div class="t" style="left:1030px;top:388px;color:#d9d9d9;font-size:11px;">Scene Collection</div>
<svg style="position:absolute;left:1012px;top:412px" width="7" height="6" viewBox="0 0 7 6"><path d="M0 0 L7 0 L3.5 6 Z" fill="#c8c8c8"/></svg>
<div style="position:absolute;box-sizing:border-box;left:1026px;top:405px;width:20px;height:19px;background:#3a5a3a;border-radius:4px;border:1px solid #4a6a4a;"></div>
<svg style="position:absolute;left:1029px;top:408px" width="14" height="13" viewBox="0 0 14 13"><rect x="0" y="0" width="14" height="3.2" fill="#7ecf7e"/><rect x="1" y="4.2" width="12" height="8.8" fill="#7ecf7e"/><rect x="5" y="6.5" width="4" height="2" fill="#2e6e2e"/></svg>
<div class="t" style="left:1050px;top:408px;color:#d9d9d9;font-size:11px;">Black Cosmetic Jar</div>
<div style="position:absolute;left:986px;top:424px;width:376px;height:20px;background:#334d80;border-radius:0px;"></div>
<div style="position:absolute;left:1015px;top:428px;width:1px;height:12px;background:#a8b8d8;border-radius:0px;"></div>
<svg style="position:absolute;left:1033px;top:430.5px" width="6" height="7" viewBox="0 0 6 7"><path d="M0 0 L6 3.5 L0 7 Z" fill="#c8d4ea"/></svg>
<div style="position:absolute;box-sizing:border-box;left:1046px;top:425px;width:20px;height:18px;background:#6a6a80;border-radius:4px;border:1px solid #7a7a90;;opacity:0.55"></div>
<svg style="position:absolute;left:1049px;top:427px" width="14" height="14" viewBox="0 0 14 14"><path d="M1.5 2 L12.5 2 L7 12.5 Z" fill="#e8a070"/><path d="M4.5 4.5 L9.5 4.5 L7 9.5 Z" fill="#b07860"/></svg>
<div class="t" style="left:1070px;top:427px;color:#f0c896;font-size:11px;">Black Cosmetic Jar</div>
<svg style="position:absolute;left:1186px;top:427px" width="15" height="15" viewBox="0 0 15 15"><path d="M2 12 Q1.6 13.6 3.2 13.8 L8.4 8.6 Q11 9.6 13 7.6 Q14.6 6 14.2 3.6 L12 5.4 L10.2 4.8 L9.6 3 L11.6 0.9 Q9.2 0.4 7.4 2.2 Q5.6 4 6.4 6.8 Z" fill="none" stroke="#6a98e8" stroke-width="1.1" stroke-linejoin="round"/></svg>
<svg style="position:absolute;left:1207px;top:427px" width="15" height="15" viewBox="0 0 15 15"><path d="M3 3 L12 3 L7.5 12 Z" fill="none" stroke="#4ab8c8" stroke-width="1.1"/><rect x="1.5" y="1.5" width="3" height="3" fill="#334d80" stroke="#4ab8c8" stroke-width="1.1"/><rect x="10.5" y="1.5" width="3" height="3" fill="#334d80" stroke="#4ab8c8" stroke-width="1.1"/><rect x="6" y="10.5" width="3" height="3" fill="#334d80" stroke="#4ab8c8" stroke-width="1.1"/></svg>
<svg style="position:absolute;left:1012px;top:451px" width="7" height="6" viewBox="0 0 7 6"><path d="M0 0 L7 0 L3.5 6 Z" fill="#c8c8c8"/></svg>
<svg style="position:absolute;left:1029px;top:447px" width="14" height="14" viewBox="0 0 14 14"><rect x="0" y="0" width="14" height="3.2" fill="#62b4e8"/><rect x="1" y="4.2" width="12" height="8.8" fill="#62b4e8"/><rect x="5" y="6.5" width="4" height="2" fill="#1e5a8a"/></svg>
<div class="t" style="left:1050px;top:447px;color:#d9d9d9;font-size:11px;">Camera</div>
<div style="position:absolute;left:1015px;top:468px;width:1px;height:12px;background:#6a8ab8;border-radius:0px;"></div>
<svg style="position:absolute;left:1033px;top:470.5px" width="6" height="7" viewBox="0 0 6 7"><path d="M0 0 L6 3.5 L0 7 Z" fill="#c8c8c8"/></svg>
<svg style="position:absolute;left:1048px;top:465px" width="16" height="16" viewBox="0 0 16 16"><circle cx="5" cy="4.5" r="3.3" fill="#d8883f"/><circle cx="11.5" cy="4.5" r="3.3" fill="#d8883f"/><circle cx="5" cy="4.5" r="0.9" fill="#282828"/><circle cx="11.5" cy="4.5" r="0.9" fill="#282828"/><rect x="3" y="8.5" width="9" height="6" fill="#d8883f"/><path d="M12 11.5 L15.5 9 L15.5 14.5 Z" fill="#d8883f"/><rect x="1" y="10" width="2" height="3" fill="#d8883f"/></svg>
<div class="t" style="left:1070px;top:468px;color:#d9d9d9;font-size:11px;">Camera</div>
<div style="position:absolute;box-sizing:border-box;left:1128px;top:465px;width:22px;height:19px;background:#2a5046;border-radius:4px;border:1px solid #3a6a5c;"></div>
<svg style="position:absolute;left:1131px;top:467px" width="16" height="16" viewBox="0 0 16 16"><path d="M3 4 Q3 1.5 6 1.5 L11 1.5 Q13.5 1.5 13.5 4 Q13.5 6.5 11 6.5 L6 6.5 Q3 6.5 3 4 Z" fill="none" stroke="#70c8a0" stroke-width="1"/><rect x="3" y="8" width="8" height="5.5" fill="none" stroke="#70c8a0" stroke-width="1"/><path d="M11 10.5 L14 9 L14 13 L11 11.5" fill="none" stroke="#70c8a0" stroke-width="1"/></svg>
<div style="position:absolute;left:1301px;top:409px;width:11px;height:11px;background:#e4e4e4;border-radius:2px;"></div>
<svg style="position:absolute;left:1301px;top:409px" width="11" height="11" viewBox="0 0 11 11"><path d="M2.2 5.5 L4.6 8 L9 2.8" fill="none" stroke="#222" stroke-width="1.7"/></svg>
<svg style="position:absolute;left:1319px;top:408px" width="14" height="12" viewBox="0 0 14 12"><path d="M1 6 Q7 -0.8 13 6 Q7 12.8 1 6 Z" fill="none" stroke="#e8e8e8" stroke-width="1.7" stroke-linejoin="round"/><circle cx="7" cy="6" r="2.3" fill="#e8e8e8"/></svg>
<svg style="position:absolute;left:1339px;top:408px" width="14" height="12" viewBox="0 0 14 12"><path d="M0.5 3 L4 3 L5 1 L9 1 L10 3 L13.5 3 L13.5 11.5 L0.5 11.5 Z" fill="#e8e8e8"/><circle cx="7" cy="7" r="3.2" fill="#282828"/><circle cx="7" cy="7" r="1.8" fill="#e8e8e8"/></svg>
<svg style="position:absolute;left:1319px;top:428px" width="14" height="12" viewBox="0 0 14 12"><path d="M1 6 Q7 -0.8 13 6 Q7 12.8 1 6 Z" fill="none" stroke="#e8eef8" stroke-width="1.7" stroke-linejoin="round"/><circle cx="7" cy="6" r="2.3" fill="#e8eef8"/></svg>
<svg style="position:absolute;left:1339px;top:428px" width="14" height="12" viewBox="0 0 14 12"><path d="M0.5 3 L4 3 L5 1 L9 1 L10 3 L13.5 3 L13.5 11.5 L0.5 11.5 Z" fill="#e8eef8"/><circle cx="7" cy="7" r="3.2" fill="#334d80"/><circle cx="7" cy="7" r="1.8" fill="#e8eef8"/></svg>
<div style="position:absolute;left:1301px;top:449px;width:11px;height:11px;background:#e4e4e4;border-radius:2px;"></div>
<svg style="position:absolute;left:1301px;top:449px" width="11" height="11" viewBox="0 0 11 11"><path d="M2.2 5.5 L4.6 8 L9 2.8" fill="none" stroke="#222" stroke-width="1.7"/></svg>
<svg style="position:absolute;left:1319px;top:448px" width="14" height="12" viewBox="0 0 14 12"><path d="M1 6 Q7 -0.8 13 6 Q7 12.8 1 6 Z" fill="none" stroke="#e8e8e8" stroke-width="1.7" stroke-linejoin="round"/><circle cx="7" cy="6" r="2.3" fill="#e8e8e8"/></svg>
<svg style="position:absolute;left:1339px;top:448px" width="14" height="12" viewBox="0 0 14 12"><path d="M0.5 3 L4 3 L5 1 L9 1 L10 3 L13.5 3 L13.5 11.5 L0.5 11.5 Z" fill="#e8e8e8"/><circle cx="7" cy="7" r="3.2" fill="#282828"/><circle cx="7" cy="7" r="1.8" fill="#e8e8e8"/></svg>
<svg style="position:absolute;left:1319px;top:468px" width="14" height="12" viewBox="0 0 14 12"><path d="M1 6 Q7 -0.8 13 6 Q7 12.8 1 6 Z" fill="none" stroke="#e8e8e8" stroke-width="1.7" stroke-linejoin="round"/><circle cx="7" cy="6" r="2.3" fill="#e8e8e8"/></svg>
<svg style="position:absolute;left:1339px;top:468px" width="14" height="12" viewBox="0 0 14 12"><path d="M0.5 3 L4 3 L5 1 L9 1 L10 3 L13.5 3 L13.5 11.5 L0.5 11.5 Z" fill="#e8e8e8"/><circle cx="7" cy="7" r="3.2" fill="#282828"/><circle cx="7" cy="7" r="1.8" fill="#e8e8e8"/></svg>
<div style="position:absolute;left:986px;top:571px;width:378px;height:443px;background:#2e2e2e;border-radius:6px;"></div>
<div style="position:absolute;box-sizing:border-box;left:1121px;top:574px;width:110px;height:18px;background:#1d1d1d;border-radius:4px;border:1px solid #2a2a2a;"></div>
<svg style="position:absolute;left:1126px;top:576px" width="15" height="15" viewBox="0 0 15 15"><circle cx="9" cy="6" r="4.6" fill="none" stroke="#e0e0e0" stroke-width="1.2"/><path d="M5.6 9.4 L1.5 13.5" stroke="#e0e0e0" stroke-width="1.5"/></svg>
<div style="position:absolute;box-sizing:border-box;left:1338px;top:575px;width:19px;height:18px;background:#222222;border-radius:3px;border:1px solid #2a2a2a;"></div>
<svg style="position:absolute;left:1342px;top:579px" width="12" height="10" viewBox="0 0 12 10"><path d="M2.8 3.4 L6 6.6 L9.2 3.4" fill="none" stroke="#d0d0d0" stroke-width="1.3"/></svg>
<div style="position:absolute;box-sizing:border-box;left:994px;top:573px;width:32px;height:19px;background:#222222;border-radius:3px;border:1px solid #2a2a2a;"></div>
<svg style="position:absolute;left:998px;top:575px" width="16" height="16" viewBox="0 0 16 16"><rect x="1" y="1.5" width="13" height="5.5" rx="2.75" fill="#e0e0e0"/><rect x="8" y="2.8" width="4.5" height="3" rx="1.2" fill="#222"/><rect x="1" y="8.5" width="13" height="5.5" rx="2.75" fill="#e0e0e0"/><rect x="8" y="9.8" width="4.5" height="3" rx="1.2" fill="#222"/></svg>
<svg style="position:absolute;left:1013px;top:578px" width="12" height="10" viewBox="0 0 12 10"><path d="M2.8 3.4 L6 6.6 L9.2 3.4" fill="none" stroke="#d0d0d0" stroke-width="1.3"/></svg>
<div style="position:absolute;left:986px;top:596px;width:28px;height:418px;background:#1d1d1d;border-radius:0px;border-bottom-left-radius:6px"></div>
<div style="position:absolute;left:986px;top:596px;width:28px;height:45px;background:#1a1a1a;border-radius:0px;"></div>
<div style="position:absolute;left:988px;top:641px;width:26px;height:26px;background:#2e2e2e;border-radius:4px;border-top-right-radius:0;border-bottom-right-radius:0"></div>
<svg style="position:absolute;left:993px;top:610px" width="16" height="16" viewBox="0 0 16 16"><rect x="3" y="1" width="1.2" height="6" fill="#d0d0d0"/><path d="M1.5 8 L5.5 8 L5.8 11.5 Q5.5 14 3.5 14 Q1.5 14 1.2 11.5 Z" fill="#bdbdbd"/><path d="M11 7 L11 14 M9 1.5 Q7.5 3 8 5 Q9 7 11 7 Q13 7 14 5 Q14.5 3 13 1.5 L13 4 L11.8 5 L10.2 5 L9 4 Z" fill="#d8d8d8" stroke="#d8d8d8" stroke-width="1.3" stroke-linejoin="round"/></svg>
<svg style="position:absolute;left:993px;top:646px" width="16" height="15" viewBox="0 0 16 15"><path d="M1.5 4 L4.5 4 L5.5 1.8 L9.5 1.8 L10.5 4 L14.5 4 L14.5 13.5 L1.5 13.5 Z" fill="none" stroke="#e0e0e0" stroke-width="1.4"/><path d="M3.5 7 L10 7 M3.5 9.5 L10 9.5 M3.5 12 L10 12" stroke="#e0e0e0" stroke-width="1"/><rect x="11.2" y="6" width="2" height="2" fill="#e0e0e0"/><rect x="11.2" y="10" width="2" height="2" fill="#e0e0e0"/></svg>
<svg style="position:absolute;left:993px;top:674px" width="16" height="15" viewBox="0 0 16 15"><rect x="1" y="1" width="14" height="4" fill="#c8c8c8"/><rect x="2" y="2.5" width="12" height="1" fill="#1d1d1d"/><rect x="3.5" y="5" width="9" height="9" fill="none" stroke="#c8c8c8" stroke-width="1.2"/><path d="M4.5 13.5 L7 9.5 L9 12 L10 11 L12 13.5 Z" fill="#c8c8c8"/></svg>
<svg style="position:absolute;left:993px;top:702px" width="16" height="16" viewBox="0 0 16 16"><path d="M1.5 5 L1.5 15 L11 15 M3.5 3.5 L3.5 13 L13 13" fill="none" stroke="#c8c8c8" stroke-width="1"/><rect x="5.5" y="1" width="9.5" height="10" fill="none" stroke="#c8c8c8" stroke-width="1.1"/><path d="M6.5 10.5 L9 6 L11 9 L12 8 L14.5 10.5 Z" fill="#c8c8c8"/><circle cx="12.5" cy="3.5" r="1" fill="#c8c8c8"/></svg>
<svg style="position:absolute;left:993px;top:730px" width="15" height="15" viewBox="0 0 15 15"><path d="M5.5 1 L1 11 Q1 13 4 13 L7 13 Z" fill="#c8c8c8"/><circle cx="11.5" cy="3" r="2" fill="#c8c8c8"/><circle cx="9" cy="10.5" r="3.6" fill="#1d1d1d" stroke="#c8c8c8" stroke-width="1.1"/><path d="M7.6 9.6 Q8.2 8.4 9.6 8.4" stroke="#c8c8c8" stroke-width="0.9" fill="none"/></svg>
<svg style="position:absolute;left:993px;top:758px" width="16" height="16" viewBox="0 0 16 16"><circle cx="8" cy="8" r="6.3" fill="#4a2a30" stroke="#a85060" stroke-width="1.3"/><path d="M3.5 5 Q5.5 5.5 6 7.5 Q5 9 6.5 11 Q7 13 6 14 M9.5 2 Q9 4.5 11 6 Q13 6.5 13.5 8 Q11.5 9.5 12.5 12" fill="none" stroke="#a85060" stroke-width="1.6"/></svg>
<svg style="position:absolute;left:993px;top:795px" width="15" height="14" viewBox="0 0 15 14"><rect x="0.5" y="0.5" width="13" height="3.5" fill="none" stroke="#dcdcdc" stroke-width="1.1"/><rect x="1.5" y="4.8" width="11" height="8.5" fill="none" stroke="#dcdcdc" stroke-width="1.1"/><rect x="5" y="6.5" width="4" height="1.5" fill="#dcdcdc"/></svg>
<svg style="position:absolute;left:993px;top:830px" width="15" height="15" viewBox="0 0 15 15"><path d="M1 4 L1 1 L4 1 M11 1 L14 1 L14 4 M14 11 L14 14 L11 14 M4 14 L1 14 L1 11" fill="none" stroke="#c09070" stroke-width="1"/><rect x="3.5" y="3.5" width="8" height="8" fill="#e09858"/></svg>
<svg style="position:absolute;left:993px;top:859px" width="15" height="15" viewBox="0 0 15 15"><path d="M2 12 Q1.6 13.6 3.2 13.8 L8.4 8.6 Q11 9.6 13 7.6 Q14.6 6 14.2 3.6 L12 5.4 L10.2 4.8 L9.6 3 L11.6 0.9 Q9.2 0.4 7.4 2.2 Q5.6 4 6.4 6.8 Z" fill="#6f8ee0" stroke="#6f8ee0" stroke-width="0.8" stroke-linejoin="round"/></svg>
<svg style="position:absolute;left:993px;top:886px" width="15" height="15" viewBox="0 0 15 15"><path d="M3.5 3.5 L12.5 12.5 M3.5 3.5 L12.5 3.5 M3.5 3.5 L3.5 12.5" stroke="#7a8ac0" stroke-width="1.1"/><circle cx="3.5" cy="3.5" r="2.5" fill="#8a9ad8"/><circle cx="12.5" cy="12.5" r="2.2" fill="#8a9ad8"/><circle cx="3.5" cy="12.5" r="1.2" fill="#8a9ad8"/><circle cx="12.5" cy="3.5" r="1.2" fill="#8a9ad8"/></svg>
<svg style="position:absolute;left:993px;top:914px" width="15" height="15" viewBox="0 0 15 15"><path d="M11 4 A6 6 0 1 0 13 9.5" fill="none" stroke="#7a8ac0" stroke-width="1.3"/><circle cx="7" cy="8" r="2.8" fill="#8a9ad8"/><circle cx="12.5" cy="3" r="2" fill="#8a9ad8"/></svg>
<svg style="position:absolute;left:993px;top:942px" width="15" height="15" viewBox="0 0 15 15"><path d="M6 14 Q1 14 1 9 Q1 6 4 4 L10 1 Q13.5 0 14 3 Q14.5 5 12 7 L9.5 12 Q8 14 6 14 Z" fill="none" stroke="#7a8ac0" stroke-width="1.2"/><circle cx="6" cy="9" r="2.6" fill="none" stroke="#8a9ad8" stroke-width="1.1"/><circle cx="6" cy="9" r="1" fill="#8a9ad8"/></svg>
<svg style="position:absolute;left:993px;top:969px" width="15" height="15" viewBox="0 0 15 15"><path d="M2 2.5 L13 2.5 L7.5 12.5 Z" fill="none" stroke="#3ac080" stroke-width="1.2"/><rect x="0.5" y="1" width="3" height="3" fill="#1d1d1d" stroke="#3ac080" stroke-width="1"/><rect x="11.5" y="1" width="3" height="3" fill="#1d1d1d" stroke="#3ac080" stroke-width="1"/><rect x="6" y="11" width="3" height="3" fill="#1d1d1d" stroke="#3ac080" stroke-width="1"/></svg>
<svg style="position:absolute;left:993px;top:997px" width="15" height="15" viewBox="0 0 15 15"><circle cx="7.5" cy="7.5" r="6.5" fill="#d07482" stroke="#e8a8b0" stroke-width="1"/><path d="M7.5 7.5 L7.5 1.2 A6.3 6.3 0 0 1 13.8 7.5 Z" fill="#3a1c24"/><path d="M7.5 7.5 L13.2 10.2 A6.3 6.3 0 0 1 7.5 13.8 L3 12 Z" fill="#3a1c24"/></svg>
<svg style="position:absolute;left:1025px;top:607px" width="15" height="15" viewBox="0 0 15 15"><path d="M5.5 1 L1 11 Q1 13 4 13 L7 13 Z" fill="#dcdcdc"/><circle cx="11.5" cy="3" r="2" fill="#dcdcdc"/><circle cx="9" cy="10.5" r="3.6" fill="#2e2e2e" stroke="#dcdcdc" stroke-width="1.1"/><path d="M7.6 9.6 Q8.2 8.4 9.6 8.4" stroke="#dcdcdc" stroke-width="0.9" fill="none"/></svg>
<div class="t" style="left:1048px;top:607px;color:#e6e6e6;font-size:11px;">Scene</div>
<svg style="position:absolute;left:1341px;top:606px" width="16" height="16" viewBox="0 0 16 16"><path d="M9 1.5 L14.5 7 L13 7.6 L10 10.6 L10 13 L3 6 L5.4 6 L8.4 3 Z M5.8 10.2 L1.5 14.5" fill="none" stroke="#9a9a9a" stroke-width="1.1"/></svg>
<div class="t" style="right:214px;top:643px;color:#d9d9d9;font-size:11px;">Render Engine</div>
<div class="t" style="right:214px;top:668px;color:#d9d9d9;font-size:11px;">Feature Set</div>
<div class="t" style="right:214px;top:693px;color:#d9d9d9;font-size:11px;">Device</div>
<div style="position:absolute;box-sizing:border-box;left:1162px;top:641px;width:195px;height:18px;background:#282828;border-radius:3px;border:1px solid #383838;"></div>
<div class="t" style="left:1169px;top:643px;color:#e6e6e6;font-size:11px;">Cycles</div>
<svg style="position:absolute;left:1345px;top:645px" width="12" height="10" viewBox="0 0 12 10"><path d="M2.8 3.4 L6 6.6 L9.2 3.4" fill="none" stroke="#d0d0d0" stroke-width="1.3"/></svg>
<div style="position:absolute;box-sizing:border-box;left:1162px;top:666px;width:195px;height:18px;background:#282828;border-radius:3px;border:1px solid #383838;"></div>
<div class="t" style="left:1169px;top:668px;color:#e6e6e6;font-size:11px;">Supported</div>
<svg style="position:absolute;left:1345px;top:670px" width="12" height="10" viewBox="0 0 12 10"><path d="M2.8 3.4 L6 6.6 L9.2 3.4" fill="none" stroke="#d0d0d0" stroke-width="1.3"/></svg>
<div style="position:absolute;box-sizing:border-box;left:1162px;top:691px;width:195px;height:18px;background:#282828;border-radius:3px;border:1px solid #383838;"></div>
<div class="t" style="left:1169px;top:693px;color:#e6e6e6;font-size:11px;">CPU</div>
<svg style="position:absolute;left:1345px;top:695px" width="12" height="10" viewBox="0 0 12 10"><path d="M2.8 3.4 L6 6.6 L9.2 3.4" fill="none" stroke="#d0d0d0" stroke-width="1.3"/></svg>
<div style="position:absolute;box-sizing:border-box;left:1162px;top:716px;width:13px;height:13px;background:#505050;border-radius:3px;border:1px solid #3a3a3a;"></div>
<div class="t" style="left:1178px;top:715px;color:#d9d9d9;font-size:11px;">Open Shading Language</div>
<div style="position:absolute;left:1023px;top:743px;width:335px;height:271px;background:#363636;border-radius:4px;border-bottom-left-radius:0;border-bottom-right-radius:0"></div>
<div style="position:absolute;left:1023px;top:743px;width:335px;height:49px;background:#3b3b3b;border-radius:4px;border-bottom-left-radius:0;border-bottom-right-radius:0"></div>
<svg style="position:absolute;left:1029px;top:750px" width="12" height="10" viewBox="0 0 12 10"><path d="M2 3.0 L6 7.0 L10 3.0" fill="none" stroke="#cfcfcf" stroke-width="1.2"/></svg>
<div class="t" style="left:1044px;top:748px;color:#e6e6e6;font-size:11px;">Sampling</div>
<svg style="position:absolute;left:1340px;top:751px" width="12" height="6" viewBox="0 0 12 6"><rect x="0" y="0" width="1.5" height="1.5" fill="#888"/><rect x="0" y="3" width="1.5" height="1.5" fill="#888"/><rect x="3" y="0" width="1.5" height="1.5" fill="#888"/><rect x="3" y="3" width="1.5" height="1.5" fill="#888"/><rect x="6" y="0" width="1.5" height="1.5" fill="#888"/><rect x="6" y="3" width="1.5" height="1.5" fill="#888"/><rect x="9" y="0" width="1.5" height="1.5" fill="#888"/><rect x="9" y="3" width="1.5" height="1.5" fill="#888"/></svg>
<svg style="position:absolute;left:1043px;top:775px" width="12" height="10" viewBox="0 0 12 10"><path d="M2 3.0 L6 7.0 L10 3.0" fill="none" stroke="#cfcfcf" stroke-width="1.2"/></svg>
<div class="t" style="left:1058px;top:773px;color:#e6e6e6;font-size:11px;">Viewport</div>
<svg style="position:absolute;left:1314px;top:773px" width="16" height="14" viewBox="0 0 16 14"><circle cx="2" cy="2" r="1.6" fill="#e0e0e0"/><circle cx="2" cy="7" r="1.6" fill="#e0e0e0"/><circle cx="2" cy="12" r="1.6" fill="#e0e0e0"/><path d="M6 2 L15 2 M6 7 L15 7 M6 12 L15 12" stroke="#c0c0c0" stroke-width="1"/></svg>
<div class="t" style="right:213px;top:803px;color:#d9d9d9;font-size:11px;">Noise Threshold</div>
<div style="position:absolute;box-sizing:border-box;left:1163px;top:804px;width:13px;height:13px;background:#4772b3;border-radius:3px;border:1px solid #3a5a90;"></div>
<svg style="position:absolute;left:1163px;top:804px" width="13" height="13" viewBox="0 0 13 13"><path d="M3 6.5 L5.5 9 L10 3.8" fill="none" stroke="#f4f4f4" stroke-width="1.7"/></svg>
<div style="position:absolute;box-sizing:border-box;left:1183px;top:801px;width:166px;height:18px;background:#545454;border-radius:3px;border:1px solid #484848;"></div>
<div class="t" style="left:1165px;width:200px;text-align:center;top:803px;color:#e6e6e6;font-size:11px;">0.1000</div>
<div class="t" style="right:213px;top:828px;color:#d9d9d9;font-size:11px;">Max Samples</div>
<div class="t" style="right:213px;top:848px;color:#d9d9d9;font-size:11px;">Min Samples</div>
<div style="position:absolute;box-sizing:border-box;left:1163px;top:826px;width:186px;height:38px;background:#545454;border-radius:3px;border:1px solid #484848;"></div>
<div style="position:absolute;left:1164px;top:845px;width:184px;height:1px;background:#3e3e3e;border-radius:0px;"></div>
<div class="t" style="left:1155px;width:200px;text-align:center;top:828px;color:#e6e6e6;font-size:11px;">1024</div>
<div class="t" style="left:1155px;width:200px;text-align:center;top:847px;color:#e6e6e6;font-size:11px;">0</div>
<svg style="position:absolute;left:1044px;top:881px" width="8" height="10" viewBox="0 0 8 10"><path d="M2 1 L6 5 L2 9" fill="none" stroke="#cfcfcf" stroke-width="1.2"/></svg>
<div style="position:absolute;box-sizing:border-box;left:1057px;top:880px;width:12px;height:12px;background:#505050;border-radius:3px;border:1px solid #3a3a3a;"></div>
<div class="t" style="left:1072px;top:879px;color:#e6e6e6;font-size:11px;">Denoise</div>
<div style="position:absolute;left:1023px;top:898px;width:335px;height:24px;background:#3b3b3b;border-radius:0px;"></div>
<svg style="position:absolute;left:1043px;top:905px" width="12" height="10" viewBox="0 0 12 10"><path d="M2 3.0 L6 7.0 L10 3.0" fill="none" stroke="#cfcfcf" stroke-width="1.2"/></svg>
<div class="t" style="left:1058px;top:904px;color:#e6e6e6;font-size:11px;">Render</div>
<svg style="position:absolute;left:1314px;top:904px" width="16" height="14" viewBox="0 0 16 14"><circle cx="2" cy="2" r="1.6" fill="#e0e0e0"/><circle cx="2" cy="7" r="1.6" fill="#e0e0e0"/><circle cx="2" cy="12" r="1.6" fill="#e0e0e0"/><path d="M6 2 L15 2 M6 7 L15 7 M6 12 L15 12" stroke="#c0c0c0" stroke-width="1"/></svg>
<div class="t" style="right:213px;top:934px;color:#d9d9d9;font-size:11px;">Noise Threshold</div>
<div style="position:absolute;box-sizing:border-box;left:1163px;top:935px;width:13px;height:13px;background:#4772b3;border-radius:3px;border:1px solid #3a5a90;"></div>
<svg style="position:absolute;left:1163px;top:935px" width="13" height="13" viewBox="0 0 13 13"><path d="M3 6.5 L5.5 9 L10 3.8" fill="none" stroke="#f4f4f4" stroke-width="1.7"/></svg>
<div style="position:absolute;box-sizing:border-box;left:1183px;top:932px;width:166px;height:19px;background:#545454;border-radius:3px;border:1px solid #484848;"></div>
<div class="t" style="left:1165px;width:200px;text-align:center;top:934px;color:#e6e6e6;font-size:11px;">0.0100</div>
<div style="position:absolute;box-sizing:border-box;left:1163px;top:957px;width:186px;height:61px;background:#545454;border-radius:3px;border:1px solid #484848;"></div>
<div style="position:absolute;left:1164px;top:975px;width:184px;height:1px;background:#3e3e3e;border-radius:0px;"></div>
<div style="position:absolute;left:1164px;top:995px;width:184px;height:1px;background:#3e3e3e;border-radius:0px;"></div>
<div class="t" style="right:213px;top:959px;color:#d9d9d9;font-size:11px;">Max Samples</div>
<div class="t" style="left:1155px;width:200px;text-align:center;top:959px;color:#e6e6e6;font-size:11px;">4096</div>
<div class="t" style="right:213px;top:979px;color:#d9d9d9;font-size:11px;">Min Samples</div>
<div class="t" style="left:1155px;width:200px;text-align:center;top:979px;color:#e6e6e6;font-size:11px;">0</div>
<div class="t" style="right:213px;top:999px;color:#d9d9d9;font-size:11px;">Time Limit</div>
<div class="t" style="left:1155px;width:200px;text-align:center;top:999px;color:#e6e6e6;font-size:11px;">0 sec</div>
<div style="position:absolute;left:1360px;top:598px;width:3px;height:218px;background:#3b3b3b;border-radius:2px;"></div>
<div style="position:absolute;left:986px;top:1014px;width:380px;height:20px;background:#181818;border-radius:0px;"></div>
<div style="position:absolute;left:1px;top:967px;width:982px;height:48px;background:#1d1d1d;border-radius:6px;"></div>
<div style="position:absolute;left:1px;top:967px;width:982px;height:25px;background:linear-gradient(#2e2e2e 0px,#343434 3px,#303030 24px);border-radius:6px;border-bottom-left-radius:0;border-bottom-right-radius:0"></div>
<div style="position:absolute;box-sizing:border-box;left:9px;top:971px;width:31px;height:18px;background:#1f1f1f;border-radius:3px;border:1px solid #262626;"></div>
<svg style="position:absolute;left:12px;top:972px" width="16" height="16" viewBox="0 0 16 16"><circle cx="8" cy="8" r="7" fill="#e8e8e8"/><path d="M10 3.5 L6 8 L10 12.5" fill="none" stroke="#2b2b2b" stroke-width="2"/></svg>
<svg style="position:absolute;left:27px;top:976px" width="12" height="10" viewBox="0 0 12 10"><path d="M2.8 3.4 L6 6.6 L9.2 3.4" fill="none" stroke="#d0d0d0" stroke-width="1.3"/></svg>
<div style="position:absolute;box-sizing:border-box;left:46px;top:971px;width:127px;height:18px;background:#1f1f1f;border-radius:3px;border:1px solid #262626;"></div>
<div style="position:absolute;left:114px;top:972px;width:1px;height:16px;background:#2a2a2a;border-radius:0px;"></div>
<div class="t" style="left:53px;top:973px;color:#e6e6e6;font-size:11px;">Playback</div>
<svg style="position:absolute;left:102px;top:976px" width="12" height="10" viewBox="0 0 12 10"><path d="M2.8 3.4 L6 6.6 L9.2 3.4" fill="none" stroke="#d0d0d0" stroke-width="1.3"/></svg>
<div class="t" style="left:122px;top:973px;color:#e6e6e6;font-size:11px;">Keying</div>
<svg style="position:absolute;left:161px;top:976px" width="12" height="10" viewBox="0 0 12 10"><path d="M2.8 3.4 L6 6.6 L9.2 3.4" fill="none" stroke="#d0d0d0" stroke-width="1.3"/></svg>
<div class="t" style="left:183px;top:973px;color:#e6e6e6;font-size:11px;">View</div>
<div class="t" style="left:223px;top:973px;color:#e6e6e6;font-size:11px;">Marker</div>
<div style="position:absolute;box-sizing:border-box;left:400px;top:971px;width:19px;height:18px;background:#4a4a4a;border-radius:3px;border:1px solid #2a2a2a;border-top-right-radius:0;border-bottom-right-radius:0"></div>
<svg style="position:absolute;left:403px;top:973px" width="14" height="14" viewBox="0 0 14 14"><circle cx="7" cy="7" r="4.3" fill="#e8e8e8"/></svg>
<div style="position:absolute;box-sizing:border-box;left:418px;top:971px;width:20px;height:18px;background:#262626;border-radius:3px;border:1px solid #2a2a2a;border-top-left-radius:0;border-bottom-left-radius:0"></div>
<svg style="position:absolute;left:422px;top:976px" width="12" height="10" viewBox="0 0 12 10"><path d="M2.8 3.4 L6 6.6 L9.2 3.4" fill="none" stroke="#555" stroke-width="1.3"/></svg>
<div style="position:absolute;box-sizing:border-box;left:444px;top:971px;width:120px;height:18px;background:#3f3f3f;border-radius:3px;border:1px solid #2a2a2a;"></div>
<div style="position:absolute;left:463px;top:972px;width:1px;height:16px;background:#353535;border-radius:0px;"></div>
<div style="position:absolute;left:484px;top:972px;width:1px;height:16px;background:#353535;border-radius:0px;"></div>
<div style="position:absolute;left:503px;top:972px;width:1px;height:16px;background:#353535;border-radius:0px;"></div>
<div style="position:absolute;left:523px;top:972px;width:1px;height:16px;background:#353535;border-radius:0px;"></div>
<div style="position:absolute;left:544px;top:972px;width:1px;height:16px;background:#353535;border-radius:0px;"></div>
<svg style="position:absolute;left:446px;top:973px" width="16" height="14" viewBox="0 0 16 14"><rect x="3.5" y="2" width="2" height="10" fill="#e8e8e8"/><path d="M12.5 2 L6.5 7 L12.5 12 Z" fill="#e8e8e8"/></svg>
<svg style="position:absolute;left:465px;top:973px" width="18" height="14" viewBox="0 0 18 14"><path d="M5 2 L10 7 L5 12 L0.5 7 Z" fill="#e8e8e8"/><path d="M16 2 L10.5 7 L16 12 Z" fill="#e8e8e8"/></svg>
<svg style="position:absolute;left:486px;top:973px" width="16" height="14" viewBox="0 0 16 14"><path d="M12.5 1.5 L3.5 7 L12.5 12.5 Z" fill="#e8e8e8"/></svg>
<svg style="position:absolute;left:506px;top:973px" width="16" height="14" viewBox="0 0 16 14"><path d="M4.5 1.5 L13.5 7 L4.5 12.5 Z" fill="#e8e8e8"/></svg>
<svg style="position:absolute;left:525px;top:973px" width="18" height="14" viewBox="0 0 18 14"><path d="M1.5 2 L7 7 L1.5 12 Z" fill="#e8e8e8"/><path d="M12.5 2 L17 7 L12.5 12 L8 7 Z" fill="#e8e8e8"/></svg>
<svg style="position:absolute;left:546px;top:973px" width="16" height="14" viewBox="0 0 16 14"><path d="M3.5 2 L9.5 7 L3.5 12 Z" fill="#e8e8e8"/><rect x="10.5" y="2" width="2" height="10" fill="#e8e8e8"/></svg>
<div style="position:absolute;box-sizing:border-box;left:705px;top:971px;width:73px;height:18px;background:#4a4a4a;border-radius:3px;border:1px solid #2a2a2a;"></div>
<div class="t" style="left:640px;width:200px;text-align:center;top:973px;color:#e6e6e6;font-size:11px;">1</div>
<div style="position:absolute;box-sizing:border-box;left:785px;top:971px;width:191px;height:18px;background:#4a4a4a;border-radius:3px;border:1px solid #2a2a2a;"></div>
<div style="position:absolute;left:803px;top:972px;width:1px;height:16px;background:#3c3c3c;border-radius:0px;"></div>
<div style="position:absolute;left:891px;top:972px;width:1px;height:16px;background:#3c3c3c;border-radius:0px;"></div>
<svg style="position:absolute;left:787px;top:972px" width="16" height="16" viewBox="0 0 16 16"><circle cx="8" cy="9.5" r="5.3" fill="none" stroke="#e0e0e0" stroke-width="1.2"/><path d="M8 6.5 L8 9.8 L10.5 9.8 M6 2.2 L10 2.2 M8 2.2 L8 4.2 M12.5 4 L13.8 5.3" fill="none" stroke="#e0e0e0" stroke-width="1.1"/></svg>
<div class="t" style="left:819px;top:973px;color:#e6e6e6;font-size:11px;">Start</div>
<div class="t" style="left:774px;width:200px;text-align:center;top:973px;color:#e6e6e6;font-size:11px;">1</div>
<div class="t" style="left:907px;top:973px;color:#e6e6e6;font-size:11px;">End</div>
<div class="t" style="right:404px;top:973px;color:#e6e6e6;font-size:11px;">250</div>
<div class="t" style="left:6px;width:200px;text-align:center;top:997px;color:#b8b8b8;font-size:11px;">20</div>
<div class="t" style="left:79px;width:200px;text-align:center;top:997px;color:#b8b8b8;font-size:11px;">40</div>
<div class="t" style="left:152px;width:200px;text-align:center;top:997px;color:#b8b8b8;font-size:11px;">60</div>
<div class="t" style="left:225px;width:200px;text-align:center;top:997px;color:#b8b8b8;font-size:11px;">80</div>
<div class="t" style="left:298px;width:200px;text-align:center;top:997px;color:#b8b8b8;font-size:11px;">100</div>
<div class="t" style="left:372px;width:200px;text-align:center;top:997px;color:#b8b8b8;font-size:11px;">120</div>
<div class="t" style="left:445px;width:200px;text-align:center;top:997px;color:#b8b8b8;font-size:11px;">140</div>
<div class="t" style="left:518px;width:200px;text-align:center;top:997px;color:#b8b8b8;font-size:11px;">160</div>
<div class="t" style="left:591px;width:200px;text-align:center;top:997px;color:#b8b8b8;font-size:11px;">180</div>
<div class="t" style="left:664px;width:200px;text-align:center;top:997px;color:#b8b8b8;font-size:11px;">200</div>
<div class="t" style="left:737px;width:200px;text-align:center;top:997px;color:#b8b8b8;font-size:11px;">220</div>
<div class="t" style="left:810px;width:200px;text-align:center;top:997px;color:#b8b8b8;font-size:11px;">240</div>
<div style="position:absolute;left:25px;top:995px;width:23px;height:13px;background:#4772b3;border-radius:4px;"></div>
<div class="t" style="left:-64px;width:200px;text-align:center;top:997px;color:#f0f0f0;font-size:11px;">1</div>
<div style="position:absolute;left:36px;top:1008px;width:1px;height:7px;background:#4772b3;border-radius:0px;"></div>
<div style="position:absolute;left:10px;top:1005px;width:966px;height:8px;background:#565656;border-radius:4px;"></div>
<svg style="position:absolute;left:10px;top:1004px" width="9" height="9" viewBox="0 0 9 9"><circle cx="4.5" cy="4.5" r="3.2" fill="none" stroke="#3a3a3a" stroke-width="1.2"/></svg>
<svg style="position:absolute;left:966px;top:1004px" width="9" height="9" viewBox="0 0 9 9"><circle cx="4.5" cy="4.5" r="3.2" fill="none" stroke="#3a3a3a" stroke-width="1.2"/></svg>
<div style="position:absolute;left:36px;top:1013px;width:1px;height:2px;background:#c0c0c0;border-radius:0px;"></div>
<div style="position:absolute;left:0px;top:1015px;width:1366px;height:19px;background:#1b1b1b;border-radius:0px;"></div>
<svg style="position:absolute;left:12px;top:1019px" width="11" height="15" viewBox="0 0 11 15"><rect x="0.6" y="0.6" width="9.8" height="13.8" rx="4" fill="none" stroke="#a0a0a0" stroke-width="1.1"/><path d="M0.6 6.5 L5.5 6.5 L5.5 0.6 Q0.6 0.6 0.6 5 Z" fill="#a0a0a0"/></svg>
<div class="t" style="left:34px;top:1019px;color:#a6a6a6;font-size:11px;">Select</div>
<svg style="position:absolute;left:223px;top:1019px" width="11" height="15" viewBox="0 0 11 15"><rect x="0.6" y="0.6" width="9.8" height="13.8" rx="4" fill="none" stroke="#a0a0a0" stroke-width="1.1"/><rect x="4" y="3" width="3" height="5" rx="1" fill="#a0a0a0"/></svg>
<div class="t" style="left:245px;top:1019px;color:#a6a6a6;font-size:11px;">Rotate View</div>
<svg style="position:absolute;left:434px;top:1019px" width="11" height="15" viewBox="0 0 11 15"><rect x="0.6" y="0.6" width="9.8" height="13.8" rx="4" fill="none" stroke="#a0a0a0" stroke-width="1.1"/><path d="M10.4 6.5 L5.5 6.5 L5.5 0.6 Q10.4 0.6 10.4 5 Z" fill="#a0a0a0"/></svg>
<div class="t" style="left:456px;top:1019px;color:#a6a6a6;font-size:11px;">Object Context Menu</div>
<div class="t" style="right:9px;top:1019px;color:#a6a6a6;font-size:11px;">3.5.0</div>
</body></html>
